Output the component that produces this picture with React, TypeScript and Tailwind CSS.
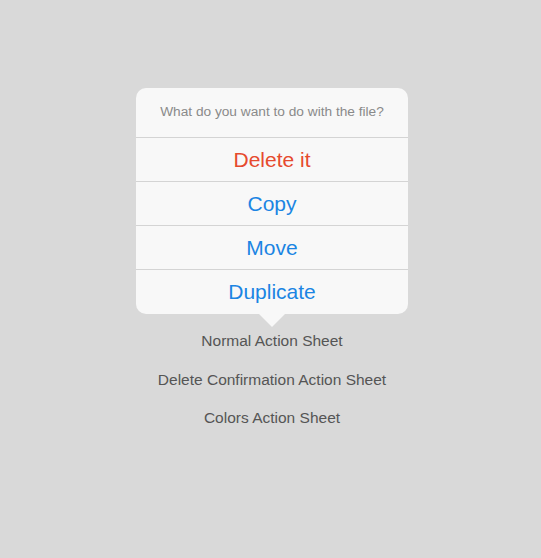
const actions = [
  { label: "Delete it", danger: true },
  { label: "Copy" },
  { label: "Move" },
  { label: "Duplicate" },
]

const links = ["Normal Action Sheet", "Delete Confirmation Action Sheet", "Colors Action Sheet"]

export default function App() {
  return (
    <div
      className="w-[541px] h-[558px] bg-[#d9d9d9] flex flex-col items-center pt-[88px] pl-[3px]"
      style={{ fontFamily: '"Liberation Sans", Arial, sans-serif' }}
    >
      <div className="relative w-[272px]">
        <div className="bg-[#f8f8f8] rounded-[10px] overflow-hidden">
          <div className="h-[50px] flex items-center justify-center text-[13.7px] text-[#8a8a8a] border-b border-[#d4d4d4]">
            What do you want to do with the file?
          </div>
          {actions.map((a, i) => (
            <div
              key={a.label}
              className={`h-[44px] flex items-center justify-center text-[21px] ${
                a.danger ? "text-[#e64a2e]" : "text-[#1b85e3]"
              } ${i < actions.length - 1 ? "border-b border-[#d4d4d4]" : ""}`}
            >
              {a.label}
            </div>
          ))}
        </div>
        <div className="absolute left-[123px] top-full w-0 h-0 border-l-[13px] border-r-[13px] border-t-[13px] border-l-transparent border-r-transparent border-t-[#f8f8f8]" />
      </div>
      <div className="mt-[8px] flex flex-col items-center">
        {links.map((l, i) => (
          <div
            key={l}
            className={`${i === 1 ? "h-[39px]" : "h-[38px]"} flex items-center text-[15.5px] text-[#555555]`}
          >
            {l}
          </div>
        ))}
      </div>
    </div>
  )
}
